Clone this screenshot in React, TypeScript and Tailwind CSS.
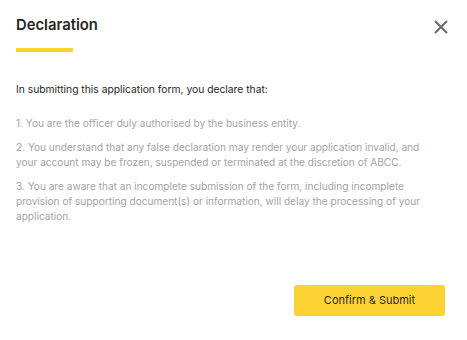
export default function App() {
  const items = [
    '1. You are the officer duly authorised by the business entity.',
    '2. You understand that any false declaration may render your application invalid, and your account may be frozen, suspended or terminated at the discretion of ABCC.',
    '3. You are aware that an incomplete submission of the form, including incomplete provision of supporting document(s) or information, will delay the processing of your application.',
  ];

  return (
    <div className="w-[467px] h-[340px] bg-white font-['Inter',sans-serif] flex flex-col">
      {/* header */}
      <div className="flex items-start justify-between pl-4 pr-[19px] pt-[16px]">
        <div>
          <h2 className="text-[14.8px] leading-[19px] font-semibold text-[#262626]">Declaration</h2>
          <div className="mt-[13px] w-[57px] h-[4px] bg-[#fdd32d]" />
        </div>
        <button className="mt-[4px] text-[#6b6b6b]">
          <svg width="14" height="14" viewBox="0 0 14 14" fill="none">
            <path d="M1.5 1.5L12.5 12.5M12.5 1.5L1.5 12.5" stroke="currentColor" strokeWidth="2" strokeLinecap="round" />
          </svg>
        </button>
      </div>

      {/* body */}
      <div className="px-4 pt-[30px] leading-[15px]">
        <p className="text-[10.3px] text-[#262626]">In submitting this application form, you declare that:</p>
        <div className="mt-[19px] flex flex-col gap-[9px] text-[10.1px] text-[#a3a3a3] pr-4">
          {items.map(t => (
            <p key={t}>{t}</p>
          ))}
        </div>
      </div>

      {/* footer */}
      <div className="mt-auto flex justify-end pr-[22px] pb-[24px]">
        <button className="w-[151px] h-[31px] rounded-[3px] bg-[#fdd235] text-[11px] text-[#2a2a2a]">
          Confirm &amp; Submit
        </button>
      </div>
    </div>
  );
}
